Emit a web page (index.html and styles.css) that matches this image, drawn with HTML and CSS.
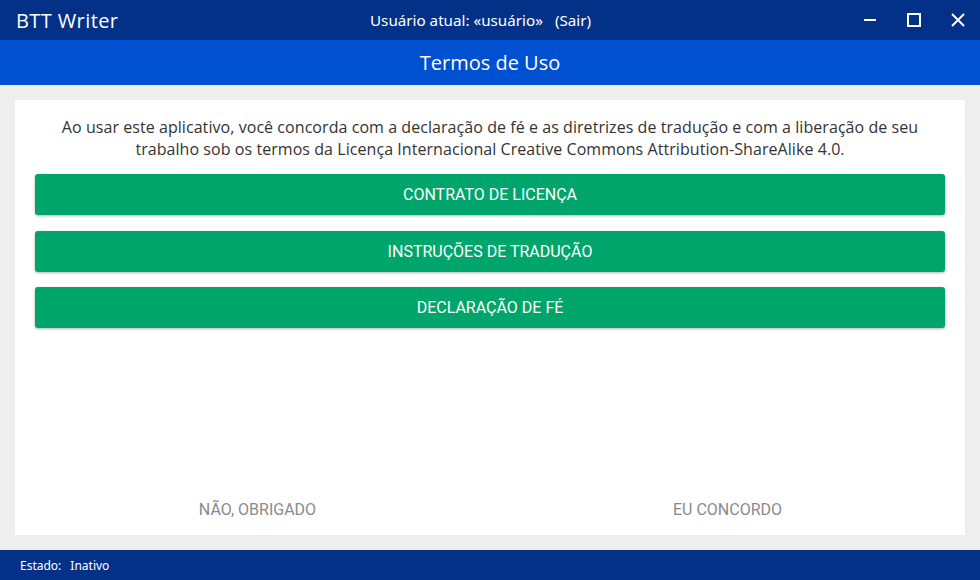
FILE: index.html
```html
<!DOCTYPE html>
<html lang="pt">
<head>
<meta charset="utf-8">
<title>BTT Writer</title>
<link rel="stylesheet" href="styles.css">
</head>
<body>
<div class="app">
  <header class="titlebar">
    <div class="app-name">BTT Writer</div>
    <div class="user"><span>Usuário atual: «usuário»</span><span>(Sair)</span></div>
    <div class="controls">
      <span class="ctl"><svg width="14" height="14" viewBox="0 0 14 14"><rect x="1" y="6" width="12" height="2" fill="#fff"/></svg></span>
      <span class="ctl"><svg width="14" height="14" viewBox="0 0 14 14"><rect x="1" y="1" width="12" height="12" fill="none" stroke="#fff" stroke-width="2"/></svg></span>
      <span class="ctl"><svg width="14" height="14" viewBox="0 0 14 14"><path d="M1 1 L13 13 M13 1 L1 13" stroke="#fff" stroke-width="2"/></svg></span>
    </div>
  </header>
  <div class="subbar">Termos de Uso</div>
  <main class="content">
    <section class="card">
      <p class="intro">Ao usar este aplicativo, você concorda com a declaração de fé e as diretrizes de tradução e com a liberação de seu trabalho sob os termos da Licença Internacional Creative Commons Attribution-ShareAlike 4.0.</p>
      <div class="btns">
        <button class="btn">CONTRATO DE LICENÇA</button>
        <button class="btn">INSTRUÇÕES DE TRADUÇÃO</button>
        <button class="btn">DECLARAÇÃO DE FÉ</button>
      </div>
      <div class="actions">
        <button class="flat">NÃO, OBRIGADO</button>
        <button class="flat">EU CONCORDO</button>
      </div>
    </section>
  </main>
  <footer class="status">
    <span>Estado:</span><span>Inativo</span>
  </footer>
</div>
</body>
</html>
```
FILE: styles.css
```css
* { box-sizing: border-box; }
html, body { margin: 0; padding: 0; }
body {
  width: 980px;
  height: 580px;
  overflow: hidden;
  font-family: "Open Sans", "Noto Sans", sans-serif;
  background: #eeeeee;
}
.app {
  display: flex;
  flex-direction: column;
  height: 580px;
}
.titlebar {
  height: 40px;
  background: #033188;
  color: #fff;
  display: flex;
  align-items: center;
  position: relative;
}
.app-name {
  font-size: 20px;
  padding-left: 16px;
  letter-spacing: 0.4px;
}
.user {
  position: absolute;
  left: 370px;
  top: 0;
  line-height: 40px;
  font-family: "Noto Sans", "Open Sans", sans-serif;
  font-size: 15.2px;
  display: flex;
  gap: 12px;
}
.controls {
  margin-left: auto;
  display: flex;
  align-items: center;
  padding-right: 15px;
  gap: 30px;
}
.ctl { display: flex; width: 14px; height: 14px; }
.subbar {
  height: 45px;
  background: #0050d2;
  color: #fff;
  font-size: 20px;
  display: flex;
  align-items: center;
  justify-content: center;
}
.content {
  flex: 1;
  padding: 15px;
  display: flex;
}
.card {
  flex: 1;
  background: #fff;
  display: flex;
  flex-direction: column;
  padding: 0 20px;
}
.intro {
  margin: 16px 16px 14px;
  text-align: center;
  font-size: 16px;
  line-height: 22px;
  letter-spacing: 0.06px;
  color: #333;
}
.btns {
  display: flex;
  flex-direction: column;
  gap: 15.5px;
}
.btn {
  height: 41px;
  border: none;
  border-radius: 3px;
  background: #00a56b;
  color: #fff;
  font-family: Roboto, sans-serif;
  font-size: 16px;
  box-shadow: 0 1px 3px rgba(0,0,0,0.3);
}
.actions {
  margin-top: auto;
  display: grid;
  grid-template-columns: 1fr 1fr;
  margin-left: -20px;
  margin-right: -20px;
  padding-bottom: 16px;
}
.flat {
  height: 20px;
  border: none;
  background: transparent;
  color: #8a8a8a;
  font-family: Roboto, sans-serif;
  font-size: 16px;
  padding: 0;
}
.flat:first-child { padding-left: 10px; }
.status {
  height: 30px;
  background: #033188;
  color: #fff;
  font-size: 12px;
  display: flex;
  align-items: center;
  padding-left: 20px;
  gap: 9px;
  font-family: "Noto Sans", "Open Sans", sans-serif;
}
```
